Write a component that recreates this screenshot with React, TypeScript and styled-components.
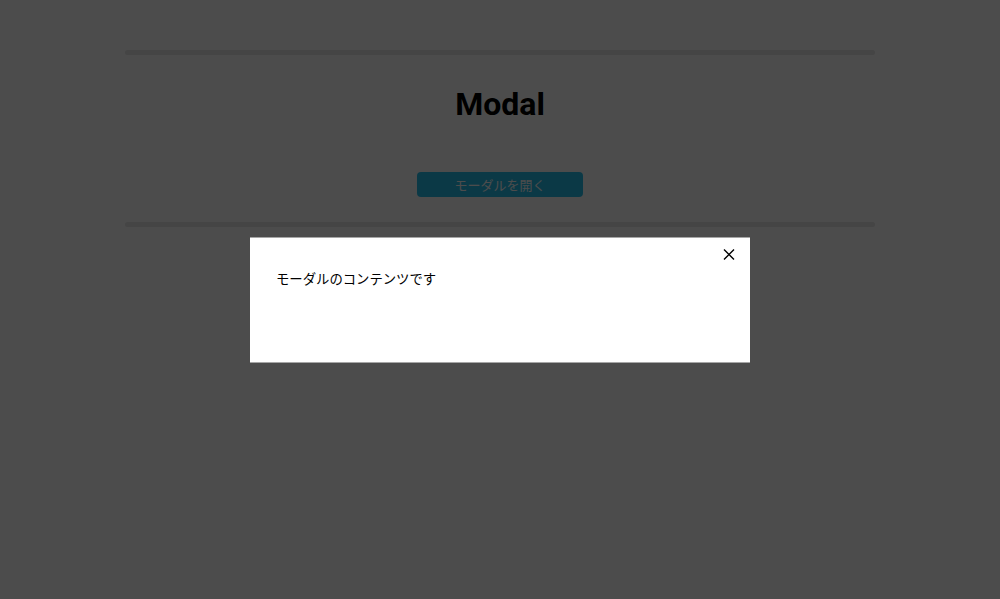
import React, {useState} from 'react';
import styled, {createGlobalStyle} from 'styled-components';

const GlobalStyle = createGlobalStyle`
  * {
    box-sizing: border-box;
  }
  body {
    margin: 0;
    background: #ffffff;
    font-family: Roboto, "Noto Sans CJK JP", sans-serif;
    color: #000000;
  }
`

export default function App() {
    const [open, setOpen] = useState(true);

    return (
        <>
            <GlobalStyle/>
            <Page>
                <Bar/>
                <Title>Modal</Title>
                <OpenButton onClick={() => setOpen(true)}>モーダルを開く</OpenButton>
                <Bar/>
            </Page>
            {open && (
                <>
                    <Overlay onClick={() => setOpen(false)}/>
                    <ModalBox>
                        <CloseButton aria-label="close" onClick={() => setOpen(false)}>
                            <svg width="12" height="12" viewBox="0 0 12 12">
                                <path d="M1 1L11 11M11 1L1 11" stroke="#000" strokeWidth="1.4" fill="none"/>
                            </svg>
                        </CloseButton>
                        <ModalText>モーダルのコンテンツです</ModalText>
                    </ModalBox>
                </>
            )}
        </>
    );
}

const Page = styled.main`
  width: 750px;
  margin: 0 auto;
  padding-top: 50px;
  display: flex;
  flex-direction: column;
  align-items: center;
`
const Bar = styled.div`
  width: 100%;
  height: 5px;
  border-radius: 3px;
  background: #e6e6e6;
`
const Title = styled.h1`
  margin: 31px 0 0;
  font-family: Roboto, sans-serif;
  font-weight: 700;
  font-size: 32px;
  line-height: 37px;
`
const OpenButton = styled.button`
  margin: 49px 0 25px;
  width: 166px;
  height: 25px;
  border: none;
  border-radius: 4px;
  background: #25c0ec;
  color: #ffffff;
  font-family: "Noto Sans CJK JP", sans-serif;
  font-size: 13px;
  cursor: pointer;
`
const Overlay = styled.div`
  position: fixed;
  inset: 0;
  background: rgba(0, 0, 0, 0.7);
`
const ModalBox = styled.div`
  position: fixed;
  top: 50%;
  left: 50%;
  transform: translate(-50%, -50%);
  width: 500px;
  height: 125px;
  padding: 32px 26px;
  background: #ffffff;
`
const CloseButton = styled.button`
  position: absolute;
  top: 9px;
  right: 13px;
  width: 16px;
  height: 16px;
  padding: 0;
  border: none;
  background: transparent;
  display: flex;
  align-items: center;
  justify-content: center;
  cursor: pointer;
`
const ModalText = styled.p`
  margin: 0;
  font-family: "Noto Sans CJK JP", sans-serif;
  font-size: 13.35px;
  line-height: 18px;
`
